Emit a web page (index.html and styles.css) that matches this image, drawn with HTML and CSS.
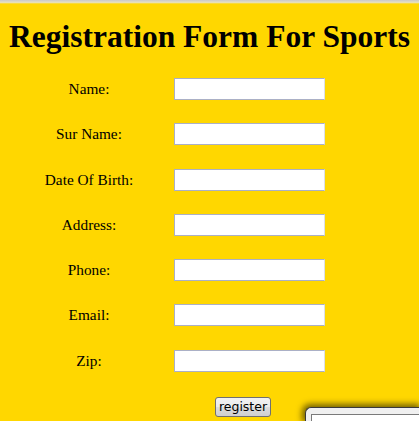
FILE: index.html
```html
<!DOCTYPE html>
<html>
<head>
<meta charset="utf-8">
<link rel="stylesheet" href="styles.css">
</head>
<body>
<div class="topbar"></div>
<h1 class="title">Registration Form For Sports</h1>
<form class="form">
  <label class="lbl">Name:</label><input class="field" type="text">
  <label class="lbl">Sur Name:</label><input class="field" type="text">
  <label class="lbl">Date Of Birth:</label><input class="field" type="text">
  <label class="lbl">Address:</label><input class="field" type="text">
  <label class="lbl">Phone:</label><input class="field" type="text">
  <label class="lbl">Email:</label><input class="field" type="text">
  <label class="lbl">Zip:</label><input class="field" type="text">
</form>
<div class="actions"><button class="btn" type="button">register</button></div>
<div class="popup"><div class="popup-inner"></div></div>
</body>
</html>
```
FILE: styles.css
```css
html, body {
  margin: 0;
  padding: 0;
  height: 100%;
  overflow: hidden;
}
body {
  background: #ffd700;
  font-family: "Liberation Serif", "Times New Roman", serif;
  font-size: 15.3px;
  color: #000;
  position: relative;
}
.topbar {
  height: 4px;
  background: linear-gradient(#c8c8c8, #e6e0c0 60%, #ffd700);
}
.title {
  margin: 14px 0 0 0;
  font-size: 31.5px;
  font-weight: bold;
  text-align: center;
  line-height: 37px;
  white-space: nowrap;
}
.form {
  margin-top: 23px;
  padding-left: 14px;
  display: grid;
  grid-template-columns: 150px 151px;
  column-gap: 10px;
  row-gap: 23.3px;
  align-items: center;
}
.lbl {
  text-align: center;
}
.field {
  box-sizing: border-box;
  width: 151px;
  height: 22px;
  margin: 0;
  border: 1px solid #abb0c6;
  border-right-color: #dcdfe6;
  background: #fff;
  padding: 0 2px;
}
.actions {
  margin-top: 25px;
  padding-left: 215px;
}
.btn {
  box-sizing: border-box;
  width: 56px;
  height: 20px;
  padding: 0;
  margin: 0;
  border: 1px solid #707070;
  border-radius: 3px;
  background: linear-gradient(#f2f2f2 0%, #ebebeb 50%, #dddddd 51%, #cfcfcf 100%);
  font-family: Tahoma, "DejaVu Sans", "Liberation Sans", sans-serif;
  font-size: 12.5px;
  color: #000;
  line-height: 17px;
}
.popup {
  position: absolute;
  left: 305px;
  top: 407px;
  box-sizing: border-box;
  width: 114px;
  height: 14px;
  border: 1px solid #3a3a3a;
  border-right: none;
  border-bottom: none;
  border-radius: 6px 0 0 0;
  background: #f0f0f0;
  box-shadow: -1px -1px 6px 2px rgba(0,0,0,0.55);
}
.popup-inner {
  margin: 6px 0 0 5px;
  height: 7px;
  border: 1px solid #7a7a7a;
  border-right: none;
  border-bottom: none;
  background: #fff;
}
```
